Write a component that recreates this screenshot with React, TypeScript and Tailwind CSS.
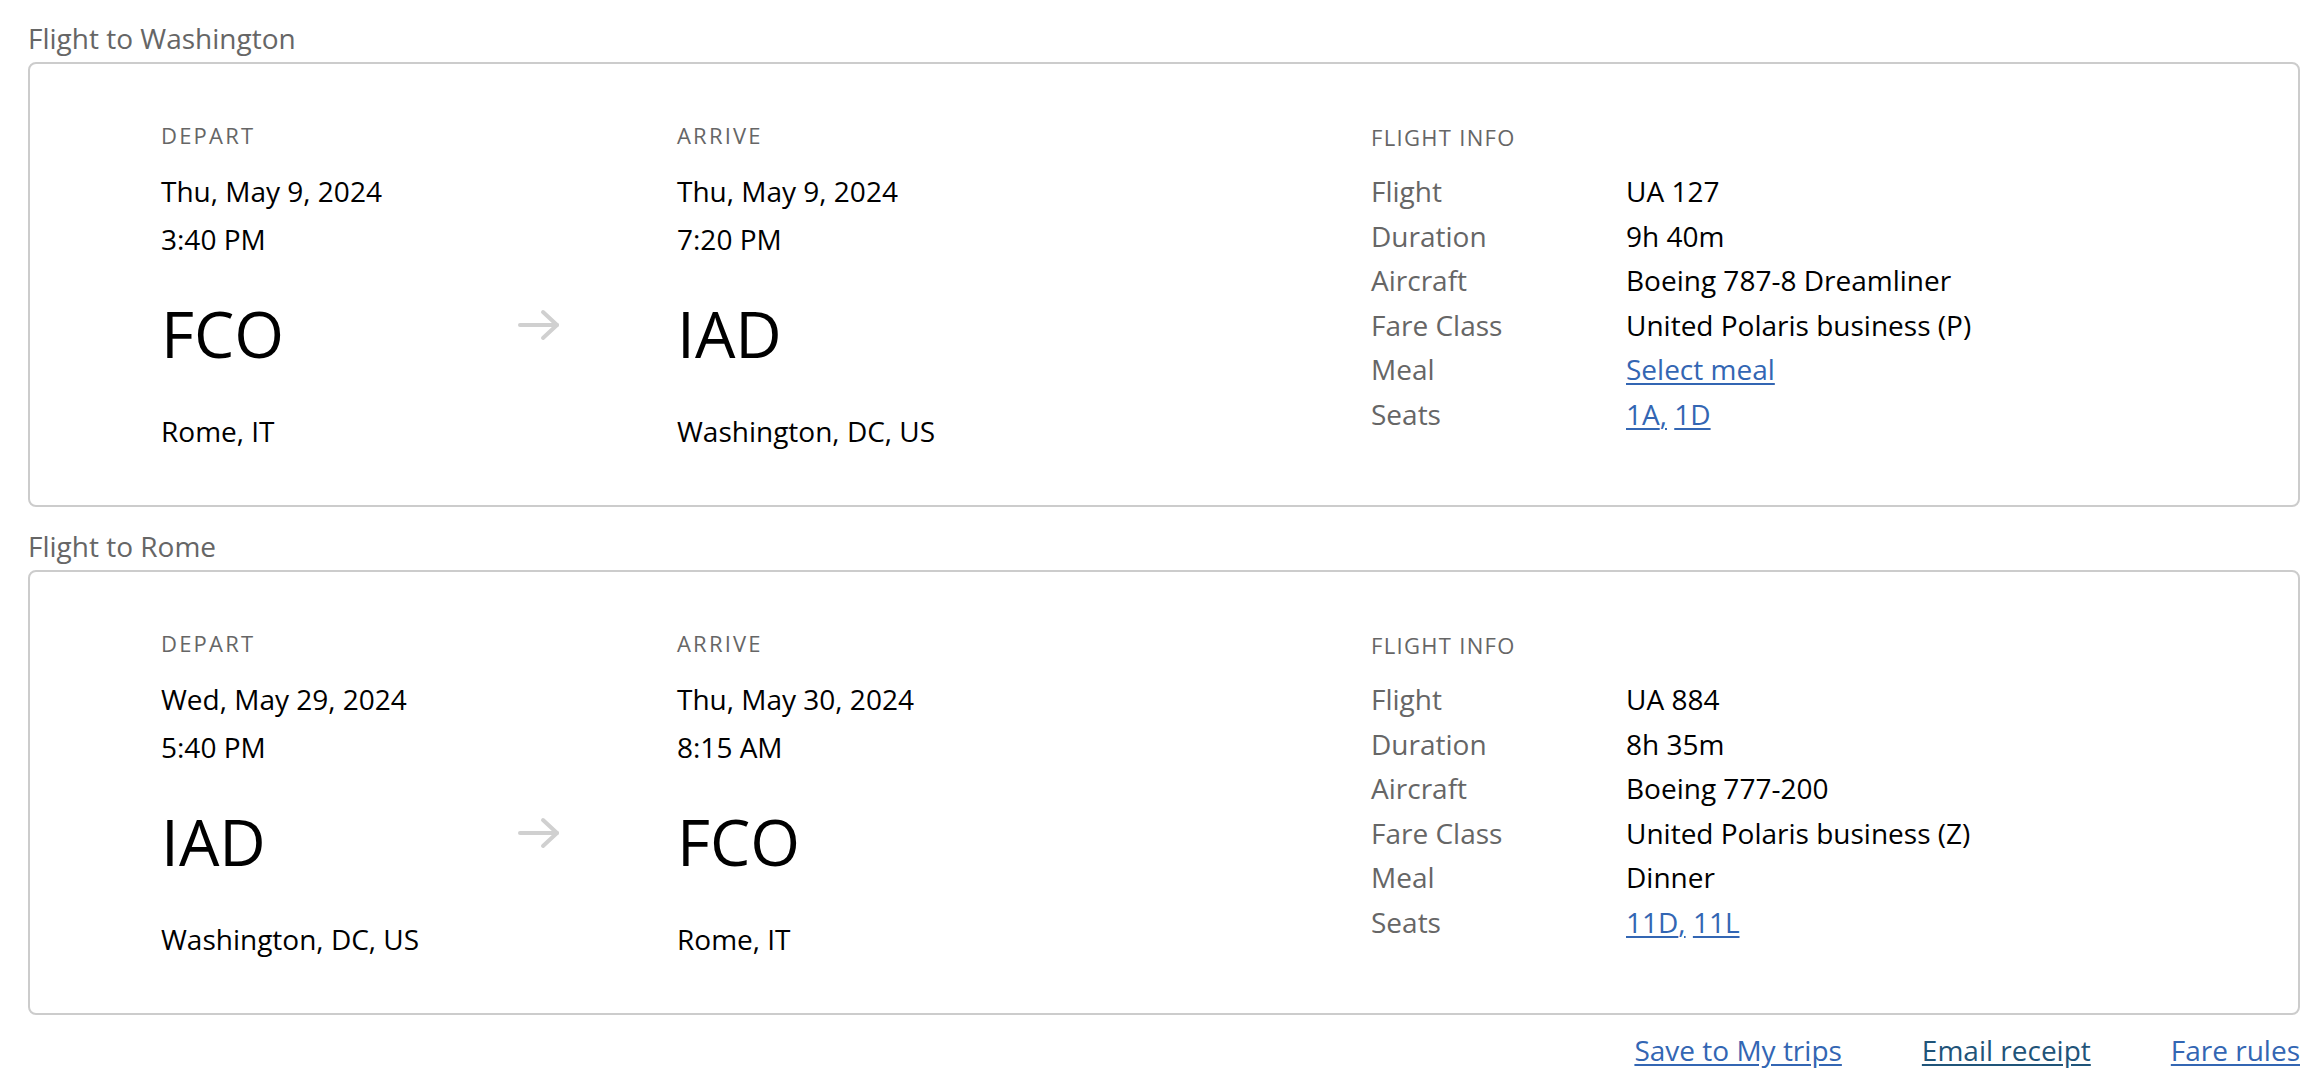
import React from 'react';

type Seg = {
  label: string;
  depDate: string;
  depTime: string;
  depCode: string;
  depCity: string;
  arrDate: string;
  arrTime: string;
  arrCode: string;
  arrCity: string;
  flight: string;
  duration: string;
  aircraft: string;
  fare: string;
  meal: string;
  mealLink: boolean;
  seats: string[];
};

const segments: Seg[] = [
  {
    label: 'Flight to Washington',
    depDate: 'Thu, May 9, 2024',
    depTime: '3:40 PM',
    depCode: 'FCO',
    depCity: 'Rome, IT',
    arrDate: 'Thu, May 9, 2024',
    arrTime: '7:20 PM',
    arrCode: 'IAD',
    arrCity: 'Washington, DC, US',
    flight: 'UA 127',
    duration: '9h 40m',
    aircraft: 'Boeing 787-8 Dreamliner',
    fare: 'United Polaris business (P)',
    meal: 'Select meal',
    mealLink: true,
    seats: ['1A', '1D'],
  },
  {
    label: 'Flight to Rome',
    depDate: 'Wed, May 29, 2024',
    depTime: '5:40 PM',
    depCode: 'IAD',
    depCity: 'Washington, DC, US',
    arrDate: 'Thu, May 30, 2024',
    arrTime: '8:15 AM',
    arrCode: 'FCO',
    arrCity: 'Rome, IT',
    flight: 'UA 884',
    duration: '8h 35m',
    aircraft: 'Boeing 777-200',
    fare: 'United Polaris business (Z)',
    meal: 'Dinner',
    mealLink: false,
    seats: ['11D', '11L'],
  },
];

function Endpoint({ title, date, time, code, city }: { title: string; date: string; time: string; code: string; city: string }) {
  return (
    <div className="flex flex-col">
      <div className="text-[22px] leading-[30px] tracking-[0.1em] text-[#666]">{title}</div>
      <div className="mt-[18px] text-[28px] leading-[47px] text-black">{date}</div>
      <div className="text-[28px] leading-[48px] text-black">{time}</div>
      <div className="mt-[39px] text-[64px] leading-[64px] text-black">{code}</div>
      <div className="mt-[43px] text-[28px] leading-[44px] text-black">{city}</div>
    </div>
  );
}

function FlightCard({ s }: { s: Seg }) {
  const rows: [string, React.ReactNode][] = [
    ['Flight', s.flight],
    ['Duration', s.duration],
    ['Aircraft', s.aircraft],
    ['Fare Class', s.fare],
    [
      'Meal',
      s.mealLink ? (
        <a href="#" className="text-[#3366b3] underline underline-offset-[3px]">
          {s.meal}
        </a>
      ) : (
        s.meal
      ),
    ],
    [
      'Seats',
      <span>
        {s.seats.map((seat, i) => (
          <React.Fragment key={seat}>
            <a href="#" className="text-[#3366b3] underline underline-offset-[3px]">
              {seat}
              {i < s.seats.length - 1 ? ',' : ''}
            </a>
            {i < s.seats.length - 1 ? ' ' : ''}
          </React.Fragment>
        ))}
      </span>,
    ],
  ];

  return (
    <section>
      <h2 className="mb-[4px] text-[28px] leading-[40px] text-[#666]">{s.label}</h2>
      <div className="rounded-lg border-2 border-[#cccccc] pb-[52px] pl-[131px] pt-[56px]">
        <div className="grid grid-cols-[355px_161px_694px_1fr]">
          <Endpoint title="DEPART" date={s.depDate} time={s.depTime} code={s.depCode} city={s.depCity} />
          <div className="pt-[187px]">
            <svg width="46" height="36" viewBox="0 0 46 36" fill="none" stroke="#d0d0d0" strokeWidth="4" strokeLinecap="round" strokeLinejoin="round">
              <path d="M4 18H41" />
              <path d="M27 5L41 18L27 31" />
            </svg>
          </div>
          <Endpoint title="ARRIVE" date={s.arrDate} time={s.arrTime} code={s.arrCode} city={s.arrCity} />
          <div className="flex flex-col">
            <div className="mt-[2px] text-[22px] leading-[30px] tracking-[0.06em] text-[#666]">FLIGHT INFO</div>
            <div className="mt-[17px] grid grid-cols-[255px_1fr] text-[28px] leading-[44.6px]">
              {rows.map(([k, v]) => (
                <React.Fragment key={k}>
                  <div className="text-[#666]">{k}</div>
                  <div className="text-black">{v}</div>
                </React.Fragment>
              ))}
            </div>
          </div>
        </div>
      </div>
    </section>
  );
}

export default function App() {
  return (
    <div className="min-h-screen bg-white pl-[28px] pr-[16px] pt-[18px]" style={{ fontFamily: '"Open Sans", sans-serif' }}>
      <div className="flex flex-col gap-[19px]">
        {segments.map((s) => (
          <FlightCard key={s.label} s={s} />
        ))}
      </div>

      {/* Footer links */}
      <div className="mt-[15px] flex justify-end gap-[80px] text-[28px] leading-[40px]">
        <a href="#" className="text-[#3366b3] underline underline-offset-[3px]">
          Save to My trips
        </a>
        <a href="#" className="text-[#1f5479] underline underline-offset-[3px]">
          Email receipt
        </a>
        <a href="#" className="text-[#3366b3] underline underline-offset-[3px]">
          Fare rules
        </a>
      </div>
    </div>
  );
}
